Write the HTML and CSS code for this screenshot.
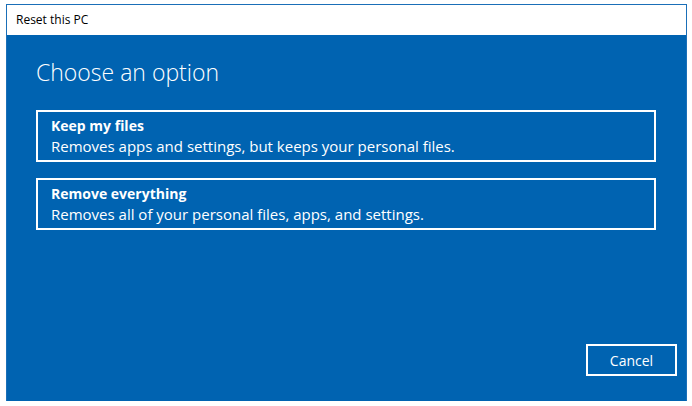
FILE: index.html
```html
<!DOCTYPE html>
<html>
<head>
<meta charset="utf-8">
<link rel="stylesheet" href="styles.css">
</head>
<body>
<div class="window">
  <div class="titlebar">Reset this PC</div>
  <div class="content">
    <h1 class="heading">Choose an option</h1>
    <div class="options">
      <div class="option">
        <div class="option-title">Keep my files</div>
        <div class="option-desc">Removes apps and settings, but keeps your personal files.</div>
      </div>
      <div class="option">
        <div class="option-title">Remove everything</div>
        <div class="option-desc">Removes all of your personal files, apps, and settings.</div>
      </div>
    </div>
    <div class="actions">
      <button class="cancel">Cancel</button>
    </div>
  </div>
</div>
</body>
</html>
```
FILE: styles.css
```css
html, body {
  margin: 0;
  padding: 0;
  background: #ffffff;
}
body {
  font-family: "Open Sans", "Noto Sans", sans-serif;
  color: #ffffff;
}
.window {
  margin: 4px 0 0 6px;
  width: 681px;
  height: 397px;
  box-sizing: border-box;
  border: 1px solid #1a6fb8;
  border-bottom: none;
  display: flex;
  flex-direction: column;
}
.titlebar {
  height: 30px;
  line-height: 30px;
  background: #ffffff;
  color: #000000;
  font-size: 12px;
  padding-left: 9px;
}
.content {
  flex: 1;
  background: #0063b1;
  display: flex;
  flex-direction: column;
  padding: 20px 9px 25px 29px;
}
.heading {
  margin: 0;
  font-size: 23px;
  font-weight: 300;
  line-height: 34px;
}
.options {
  display: flex;
  flex-direction: column;
  gap: 16px;
  margin-top: 21px;
}
.option {
  width: 620px;
  height: 52px;
  box-sizing: border-box;
  border: 2px solid #ffffff;
  padding: 4px 13px;
}
.option-title {
  font-size: 14px;
  font-weight: 700;
  line-height: 20px;
}
.option-desc {
  font-size: 15px;
  line-height: 20px;
}
.actions {
  margin-top: auto;
  display: flex;
  justify-content: flex-end;
}
.cancel {
  width: 91px;
  height: 32px;
  box-sizing: border-box;
  border: 2px solid #ffffff;
  background: transparent;
  color: #ffffff;
  font-family: "Open Sans", "Noto Sans", sans-serif;
  font-size: 14px;
  padding: 0;
}
```
